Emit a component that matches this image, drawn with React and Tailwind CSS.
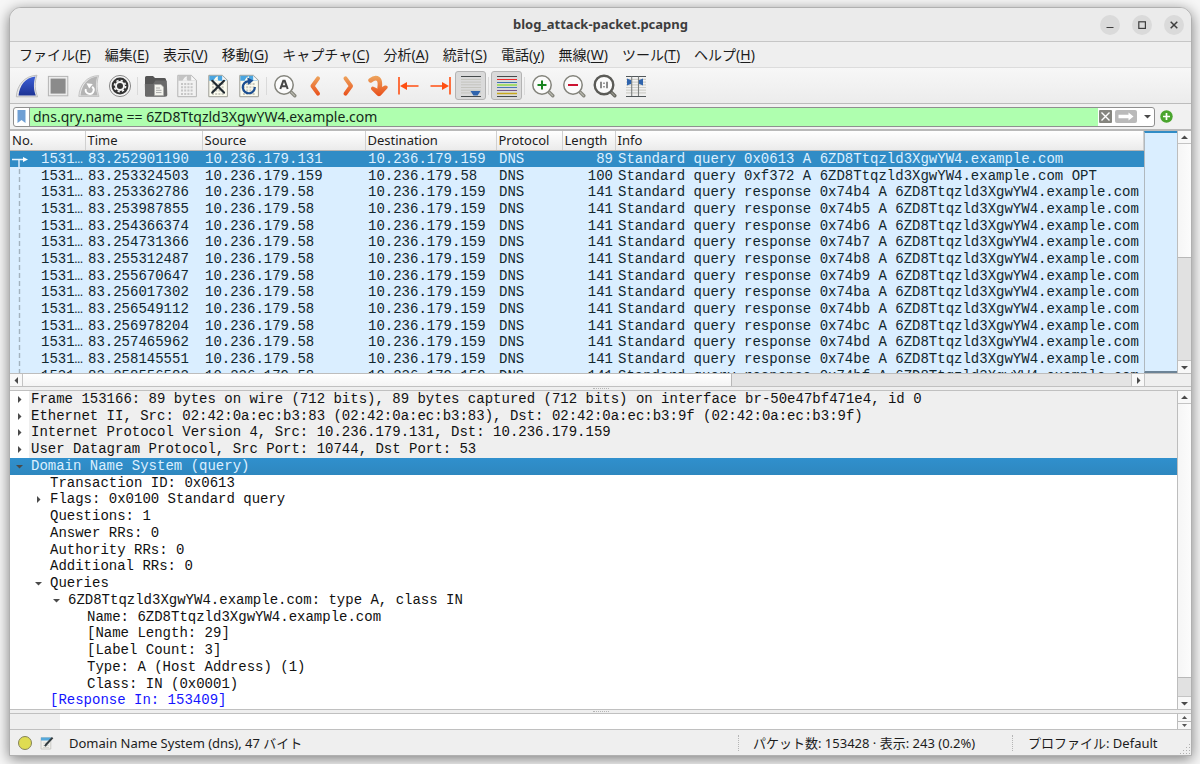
import React from 'react';

const MENUS = [
  ['ファイル', 'F'],
  ['編集', 'E'],
  ['表示', 'V'],
  ['移動', 'G'],
  ['キャプチャ', 'C'],
  ['分析', 'A'],
  ['統計', 'S'],
  ['電話', 'y'],
  ['無線', 'W'],
  ['ツール', 'T'],
  ['ヘルプ', 'H'],
];

const HOST = '6ZD8Ttqzld3XgwYW4.example.com';
const CLIENT = '10.236.179.159';
const SERVER = '10.236.179.58';

const response = (time, id) => ({
  time,
  source: SERVER,
  destination: CLIENT,
  length: 141,
  info: `Standard query response 0x${id} A ${HOST}`,
});

const PACKETS = [
  { time: '83.252901190', source: '10.236.179.131', destination: CLIENT, length: 89, info: `Standard query 0x0613 A ${HOST}` },
  { time: '83.253324503', source: CLIENT, destination: SERVER, length: 100, info: `Standard query 0xf372 A ${HOST} OPT` },
  response('83.253362786', '74b4'),
  response('83.253987855', '74b5'),
  response('83.254366374', '74b6'),
  response('83.254731366', '74b7'),
  response('83.255312487', '74b8'),
  response('83.255670647', '74b9'),
  response('83.256017302', '74ba'),
  response('83.256549112', '74bb'),
  response('83.256978204', '74bc'),
  response('83.257465962', '74bd'),
  response('83.258145551', '74be'),
  response('83.258556582', '74bf'),
];

const COLUMNS = [
  { name: 'No.', width: 'w-[75px]' },
  { name: 'Time', width: 'w-[117px]' },
  { name: 'Source', width: 'w-[163px]' },
  { name: 'Destination', width: 'w-[131px]' },
  { name: 'Protocol', width: 'w-[66px]' },
  { name: 'Length', width: 'w-[53px]' },
  { name: 'Info', width: 'w-auto' },
];

const INDENTS = ['pl-0', 'pl-[19px]', 'pl-[37px]', 'pl-[56px]'];

const DETAILS = [
  { depth: 0, mark: 'closed', shaded: true, text: 'Frame 153166: 89 bytes on wire (712 bits), 89 bytes captured (712 bits) on interface br-50e47bf471e4, id 0' },
  { depth: 0, mark: 'closed', shaded: true, text: 'Ethernet II, Src: 02:42:0a:ec:b3:83 (02:42:0a:ec:b3:83), Dst: 02:42:0a:ec:b3:9f (02:42:0a:ec:b3:9f)' },
  { depth: 0, mark: 'closed', shaded: true, text: 'Internet Protocol Version 4, Src: 10.236.179.131, Dst: 10.236.179.159' },
  { depth: 0, mark: 'closed', shaded: true, text: 'User Datagram Protocol, Src Port: 10744, Dst Port: 53' },
  { depth: 0, mark: 'open', selected: true, text: 'Domain Name System (query)' },
  { depth: 1, text: 'Transaction ID: 0x0613' },
  { depth: 1, mark: 'closed', text: 'Flags: 0x0100 Standard query' },
  { depth: 1, text: 'Questions: 1' },
  { depth: 1, text: 'Answer RRs: 0' },
  { depth: 1, text: 'Authority RRs: 0' },
  { depth: 1, text: 'Additional RRs: 0' },
  { depth: 1, mark: 'open', text: 'Queries' },
  { depth: 2, mark: 'open', text: `${HOST}: type A, class IN` },
  { depth: 3, text: `Name: ${HOST}` },
  { depth: 3, text: '[Name Length: 29]' },
  { depth: 3, text: '[Label Count: 3]' },
  { depth: 3, text: 'Type: A (Host Address) (1)' },
  { depth: 3, text: 'Class: IN (0x0001)' },
  { depth: 1, link: true, text: '[Response In: 153409]' },
];

const Icon = ({ children }) => (
  <svg viewBox="0 0 24 24" className="w-6 h-6" fill="none" aria-hidden="true">
    {children}
  </svg>
);

const FIN = 'M3.5 21.5C4.5 12 10 3.5 20.5 2.5C18.2 8.5 18.6 16 20.8 21.5Z';

const StartIcon = () => (
  <Icon>
    <defs>
      <linearGradient id="fin" x1="0" y1="0" x2="0" y2="1">
        <stop offset="0" stopColor="#3c5fd6" />
        <stop offset="1" stopColor="#1d3394" />
      </linearGradient>
    </defs>
    <path d="M1.3 22.8C2 11 9.5 1.8 22 1.2C19.3 8.5 19.8 16.5 22.6 22.8Z" fill="#e8e8e8" stroke="#b2b2b2" strokeWidth="0.8" />
    <path d={FIN} fill="url(#fin)" />
  </Icon>
);

const StopIcon = () => (
  <Icon>
    <rect x="2.4" y="2.4" width="19.4" height="19.4" fill="#ececec" stroke="#b4b4b4" />
    <rect x="4.6" y="4.6" width="15" height="15" fill="#8b8b8b" />
  </Icon>
);

const RestartIcon = () => (
  <Icon>
    <path d="M1.8 22.4C2.6 11 9.5 2 21.6 1.6C19.3 8.5 19.8 16.5 22 22.4Z" fill="#e8e8e8" stroke="#b9b9b9" strokeWidth="0.8" />
    <path d={FIN} fill="#b4b4b4" />
    <path d="M8.8 15A4 4 0 1 0 15.2 12.8" stroke="#fff" strokeWidth="1.9" />
    <path d="M9.5 9.2L15.8 10L12.2 14.4Z" fill="#fff" />
  </Icon>
);

const OptionsIcon = () => (
  <Icon>
    <circle cx="12" cy="12" r="10.6" fill="#f2f2f2" stroke="#8a8a8a" strokeWidth="1" />
    <circle cx="12" cy="12" r="8.4" fill="#333" />
    <circle cx="12" cy="12" r="4" stroke="#f4f4f4" strokeWidth="2" />
    <circle cx="12" cy="12" r="5.6" stroke="#f4f4f4" strokeWidth="1.6" strokeDasharray="2.2 2.2" />
  </Icon>
);

const OpenIcon = () => (
  <Icon>
    <path d="M1 3.5Q1 2 2.5 2H9L11 4H20.5Q22 4 22 5.5V21Q22 22.5 20.5 22.5H2.5Q1 22.5 1 21Z" fill="#555" />
    <path d="M0.8 10H9L11.5 6.5H22.8L23.3 21Q23.3 22.6 21.6 22.6H2.6Q1.2 22.6 1.1 21Z" fill="#6a6a6a" />
    <path d="M10.5 10.5H17L19.5 13V21.5H10.5Z" fill="#f4f4ee" stroke="#aaa" strokeWidth="0.6" />
    <path d="M12 14H16M12 16.3H17.5M12 18.6H17.5" stroke="#aaa" />
  </Icon>
);

const Sheet = ({ band, paper, edge, digits, children }) => (
  <Icon>
    <path d="M2.8 1.3H16.4L21.4 6.3V22.7H2.8Z" fill={paper} stroke={edge} />
    <path d="M3.3 1.8H16L20.9 6.8H3.3Z" fill={band} />
    <path d="M7.5 6.8Q9 3 12 2.2Q11.3 4.5 12.5 6.8Z" fill={paper} />
    <path d="M16.2 1.8V6.6H20.9Z" fill="#f8f8f8" />
    <path d="M6 10H18.5M6 13.3H18.5M6 16.6H18.5M6 19.9H18.5" stroke={digits} strokeWidth="2" strokeDasharray="2 1.2" />
    {children}
  </Icon>
);

const SaveIcon = () => <Sheet band="#c4c4c4" paper="#f1f1f1" edge="#b4b4b4" digits="#c6c6c6" />;

const CloseFileIcon = () => (
  <Sheet band="#4aa5e0" paper="#fbfbee" edge="#9c9c94" digits="#cacabf">
    <path d="M6.3 6.8L18 18.6M18 6.8L6.3 18.6" stroke="#222b31" strokeWidth="2.2" strokeLinecap="round" />
  </Sheet>
);

const ReloadIcon = () => (
  <Sheet band="#4aa5e0" paper="#fbfbee" edge="#9c9c94" digits="#cacabf">
    <path d="M11 7.3A6 6 0 1 0 17.8 13" stroke="#1d4f91" strokeWidth="2.2" />
    <path d="M10.3 3.5L16.5 6.6L11.3 11Z" fill="#1d4f91" />
  </Sheet>
);

const Lens = ({ dark, children }) => (
  <Icon>
    <path d="M17.5 17.5L21.8 21.8" stroke={dark ? '#66665f' : '#85857c'} strokeWidth="3.4" strokeLinecap="round" />
    <path d="M18 18L21.6 21.6" stroke={dark ? '#96968c' : '#b8b8ae'} strokeWidth="1.2" strokeLinecap="round" />
    <circle cx="11" cy="11" r={dark ? 9.3 : 9.2} fill="#fbfbfb" stroke={dark ? '#5b5b57' : '#83837b'} strokeWidth={dark ? 2.4 : 1.5} />
    {children}
  </Icon>
);

const FindIcon = () => (
  <Lens>
    <path d="M7.3 15L10.3 6.8H11.7L14.7 15M8.6 12.2H13.4" stroke="#474747" strokeWidth="2" />
  </Lens>
);

const ZoomInIcon = () => (
  <Lens>
    <path d="M11 6.5V15.5M6.5 11H15.5" stroke="#17841f" strokeWidth="2" />
  </Lens>
);

const ZoomOutIcon = () => (
  <Lens>
    <path d="M6 11H16" stroke="#cc1230" strokeWidth="2" />
  </Lens>
);

const ZoomResetIcon = () => (
  <Lens dark>
    <path d="M8 7.8V14.2M14 7.8V14.2" stroke="#666" strokeWidth="1.5" />
    <path d="M11 8.6V10M11 12V13.4" stroke="#666" strokeWidth="1.3" />
  </Lens>
);

const Orange = ({ id }) => (
  <defs>
    <linearGradient id={id} x1="0" y1="0" x2="0" y2="24" gradientUnits="userSpaceOnUse">
      <stop offset="0.1" stopColor="#eda35c" />
      <stop offset="0.9" stopColor="#e9501b" />
    </linearGradient>
  </defs>
);

const BackIcon = () => (
  <Icon>
    <Orange id="back" />
    <path d="M14 4.3L8.5 12L14 19.7" stroke="url(#back)" strokeWidth="4" strokeLinecap="round" strokeLinejoin="round" />
  </Icon>
);

const ForwardIcon = () => (
  <Icon>
    <Orange id="forward" />
    <path d="M10.5 4.3L16 12L10.5 19.7" stroke="url(#forward)" strokeWidth="4" strokeLinecap="round" strokeLinejoin="round" />
  </Icon>
);

const GotoIcon = () => (
  <Icon>
    <Orange id="goto" />
    <path d="M4.6 6.4Q9 2.8 12.3 5Q14.6 7 13.6 14" stroke="url(#goto)" strokeWidth="4.6" strokeLinecap="round" />
    <path d="M5.2 13.6Q6.2 12.1 8 12.9L12.3 15L18.8 11.6Q22.2 11.2 21.6 14L14.8 21.5Q13 22.8 11.2 21.6L5.4 15.8Q4.6 14.6 5.2 13.6Z" fill="url(#goto)" />
  </Icon>
);

const FirstIcon = () => (
  <Icon>
    <path d="M2 3V20.5M7 12H21.5" stroke="#ff4f12" strokeWidth="1.6" />
    <path d="M3 12L10 8V16Z" fill="#ff4f12" />
  </Icon>
);

const LastIcon = () => (
  <Icon>
    <path d="M22 3V20.5M2.5 12H17" stroke="#ff4f12" strokeWidth="1.6" />
    <path d="M21 12L14 8V16Z" fill="#ff4f12" />
  </Icon>
);

const AutoScrollIcon = () => (
  <Icon>
    <path d="M2 5.4H22M2 8.1H22M2 10.8H22M2 13.5H22M2 16.2H22M2 18.9H22" stroke="#c4c4be" strokeWidth="1" />
    <path d="M2 2.5H22M2 22.5H22" stroke="#454a4b" strokeWidth="1" />
    <path d="M11.5 17H21.5L18.6 21.6H14.4Z" fill="#2f64ad" />
  </Icon>
);

const ColorizeIcon = () => (
  <Icon>
    <path d="M2 2.5H22M2 22.5H22" stroke="#454a4b" strokeWidth="1" />
    <path d="M2 5.5H22" stroke="#ef2929" strokeWidth="1.2" />
    <path d="M2 8.5H22" stroke="#3c6fb0" strokeWidth="1.1" />
    <path d="M2 11H22" stroke="#a5dc6c" strokeWidth="2" />
    <path d="M2 13.5H22" stroke="#4a78b5" strokeWidth="1.1" />
    <path d="M2 16.5H22" stroke="#77568a" strokeWidth="1.1" />
    <path d="M2 19.5H22" stroke="#c8a81c" strokeWidth="1.3" />
  </Icon>
);

const ResizeIcon = () => (
  <Icon>
    <path d="M2 5.4H22M2 8.1H22M2 10.8H22M2 13.5H22M2 16.2H22M2 18.9H22" stroke="#cfcfca" strokeWidth="1.2" />
    <path d="M2 2.5H22M2 22.5H22" stroke="#51575a" strokeWidth="1.1" />
    <path d="M7.7 2.4V22M14.5 2.4V22" stroke="#7d8080" strokeWidth="1.1" />
    <path d="M3 4.5L7.2 6.2V9.8L3 11.5ZM19 4.5L14.9 6.2V9.8L19 11.5Z" fill="#2f64ad" />
  </Icon>
);

const TOOLS = [
  { label: 'Start capture', icon: StartIcon },
  { label: 'Stop capture', icon: StopIcon },
  { label: 'Restart capture', icon: RestartIcon },
  { label: 'Capture options', icon: OptionsIcon },
  null,
  { label: 'Open', icon: OpenIcon },
  { label: 'Save', icon: SaveIcon },
  { label: 'Close', icon: CloseFileIcon },
  { label: 'Reload', icon: ReloadIcon },
  null,
  { label: 'Find packet', icon: FindIcon },
  { label: 'Previous packet', icon: BackIcon },
  { label: 'Next packet', icon: ForwardIcon },
  { label: 'Go to packet', icon: GotoIcon },
  { label: 'First packet', icon: FirstIcon },
  { label: 'Last packet', icon: LastIcon },
  { label: 'Auto scroll', icon: AutoScrollIcon, pressed: true },
  null,
  { label: 'Colorize', icon: ColorizeIcon, pressed: true },
  null,
  { label: 'Zoom in', icon: ZoomInIcon },
  { label: 'Zoom out', icon: ZoomOutIcon },
  { label: 'Normal size', icon: ZoomResetIcon },
  { label: 'Resize columns', icon: ResizeIcon },
];

const ARROWS = {
  up: 'M1 6L4.5 2.5L8 6Z',
  down: 'M1 3L4.5 6.5L8 3Z',
  left: 'M6 1L2.5 4.5L6 8Z',
  right: 'M3 1L6.5 4.5L3 8Z',
};

const Arrow = ({ dir }) => (
  <svg viewBox="0 0 9 9" className="w-[9px] h-[9px]" aria-hidden="true">
    <path d={ARROWS[dir]} fill="#4a4a4a" />
  </svg>
);

const VerticalScrollbar = ({ thumb }) => (
  <div className="w-[14px] shrink-0 flex flex-col bg-[#e1e1e1] border-l border-[#bdbdbd]">
    <button type="button" aria-label="Scroll up" className="h-[13px] shrink-0 flex items-center justify-center bg-[#f8f8f8] border-b border-[#c4c4c4]">
      <Arrow dir="up" />
    </button>
    <div className="flex-1 min-h-0">
      <div className={`bg-gradient-to-r from-[#f6f6f6] to-[#fcfcfc] border-b border-[#b8b8b8] ${thumb}`} />
    </div>
    <button type="button" aria-label="Scroll down" className="h-[13px] shrink-0 flex items-center justify-center bg-[#f8f8f8] border-t border-[#c4c4c4]">
      <Arrow dir="down" />
    </button>
  </div>
);

const Splitter = () => (
  <div className="h-[5px] shrink-0 flex items-center justify-center bg-[#efefef] border-y border-[#c0c0c0]">
    <div className="w-4 border-t border-dotted border-[#b5b5b5]" />
  </div>
);

const TitleBar = () => (
  <header className="h-[34px] shrink-0 grid grid-cols-[1fr_auto_1fr] items-center bg-[#ebebeb] border-b border-[#c6c6c6]">
    <span />
    <h1 className="text-[13px] font-bold text-[#3d3d3d]">blog_attack-packet.pcapng</h1>
    <div className="flex justify-end gap-3 pr-[7px]">
      <button type="button" aria-label="Minimize" className="w-5 h-5 rounded-full bg-[#dadada]">
        <svg viewBox="0 0 20 20" className="w-5 h-5"><path d="M6.5 12.5H13.5" stroke="#3d3d3d" strokeWidth="1.2" /></svg>
      </button>
      <button type="button" aria-label="Maximize" className="w-5 h-5 rounded-full bg-[#dadada]">
        <svg viewBox="0 0 20 20" className="w-5 h-5"><rect x="6.8" y="6.8" width="6.6" height="6.6" fill="none" stroke="#3d3d3d" strokeWidth="1.2" /></svg>
      </button>
      <button type="button" aria-label="Close" className="w-5 h-5 rounded-full bg-[#dadada]">
        <svg viewBox="0 0 20 20" className="w-5 h-5"><path d="M6.7 6.7L13.3 13.3M13.3 6.7L6.7 13.3" stroke="#3d3d3d" strokeWidth="1.5" /></svg>
      </button>
    </div>
  </header>
);

const FilterBar = () => (
  <div className="h-[27px] shrink-0 flex items-center gap-[5px] pl-[3px] pr-[18px] bg-[#f1f1f1] border-b-2 border-[#b9b9b9]">
    <div className="flex-1 h-[20px] flex items-center bg-white border border-[#8f8f8f] rounded-[3px] overflow-hidden">
      <button type="button" aria-label="Bookmark filter" className="w-4 h-full shrink-0 flex items-center justify-center border-r border-[#9a9a9a]">
        <svg viewBox="0 0 9 13" className="w-[9px] h-[13px]"><path d="M0.5 0H8.5V13L4.5 10L0.5 13Z" fill="#6f9fd4" /></svg>
      </button>
      <input
        type="text"
        aria-label="Display filter"
        defaultValue={`dns.qry.name == ${HOST}`}
        className="flex-1 min-w-0 h-full pl-[3px] bg-[#afffaf] text-[14px] text-[#14281a] outline-none"
      />
      <div className="flex items-center gap-[3px] pl-px">
        <button type="button" aria-label="Clear filter" className="w-[13px] h-[13px] rounded-[1px] bg-[#85857f]">
          <svg viewBox="0 0 13 13" className="w-[13px] h-[13px]"><path d="M2.5 2.5L10.5 10.5M10.5 2.5L2.5 10.5" stroke="#fff" strokeWidth="1.4" /></svg>
        </button>
        <button type="button" aria-label="Apply filter" className="w-[22px] h-[13px] rounded-[2px] bg-[#bababa]">
          <svg viewBox="0 0 22 13" className="w-[22px] h-[13px]"><path d="M3.5 4.8H13.5V2.5L18.5 6.5L13.5 10.5V8.2H3.5Z" fill="#fff" /></svg>
        </button>
        <button type="button" aria-label="Recent filters" className="w-[14px] h-[13px] flex items-center justify-center">
          <Arrow dir="down" />
        </button>
      </div>
    </div>
    <button type="button" aria-label="Add filter button" className="w-[13px] h-[13px]">
      <svg viewBox="0 0 13 13" className="w-[13px] h-[13px]">
        <circle cx="6.5" cy="6.5" r="6.2" fill="#4aa52e" />
        <path d="M6.5 3V10M3 6.5H10" stroke="#fff" strokeWidth="1.7" />
      </svg>
    </button>
  </div>
);

const PacketList = () => (
  <section className="shrink-0">
    <div className="flex h-[242px]">
      <div className="relative flex-1 min-w-0 overflow-hidden bg-[#daeeff]">
        <table className="w-full h-[253px] table-fixed border-collapse whitespace-nowrap">
          <thead>
            <tr className="h-[19px] bg-gradient-to-b from-white to-[#ebebeb]">
              {COLUMNS.map((col) => (
                <th key={col.name} scope="col" className={`${col.width} p-0 pl-[2px] border-r border-b border-r-[#d0d0d0] border-b-[#b5b5b5] text-left text-[13px] leading-[18px] font-normal text-[#1c1c1c]`}>
                  {col.name}
                </th>
              ))}
            </tr>
          </thead>
          <tbody className='font-["Liberation_Mono",monospace] text-[14px] leading-4'>
            {PACKETS.map((p, i) => (
              <tr key={p.time} className={i === 0 ? 'bg-[#308cc6] text-[#dcefff]' : 'text-[#12272e]'}>
                <td className="p-0 pr-[2px] text-right">1531…</td>
                <td className="p-0 pl-[3px]">{p.time}</td>
                <td className="p-0 pl-[3px]">{p.source}</td>
                <td className="p-0 pl-[3px]">{p.destination}</td>
                <td className="p-0 pl-[3px]">DNS</td>
                <td className="p-0 pr-[2px] text-right">{p.length}</td>
                <td className="p-0 pl-[3px]">{p.info}</td>
              </tr>
            ))}
          </tbody>
        </table>
        {/* conversation marker drawn over the No. column */}
        <svg viewBox="0 0 20 222" className="absolute left-0 top-5 w-5 h-[222px]" aria-hidden="true">
          <path d="M2 8.5H14M9 8.5V16" stroke="#e8f4ff" strokeWidth="1.4" />
          <path d="M13 6L18 8.5L13 11Z" fill="#fff" />
          <path d="M9.5 18V222" stroke="#a3b3bf" strokeWidth="1.4" strokeDasharray="5 3" />
        </svg>
      </div>
      <div className="w-[33px] shrink-0 bg-[#daeeff] border-l border-l-[#b0b8be] border-t-2 border-t-[#308cc6] border-b-2 border-b-[#6c8396]" />
      <VerticalScrollbar thumb="h-[53%]" />
    </div>
    <div className="flex h-[13px] bg-[#efefef] border-t border-[#bdbdbd]">
      <div className="flex-1 flex bg-[#e4e4e4]">
        <button type="button" aria-label="Scroll left" className="w-[13px] shrink-0 flex items-center justify-center bg-[#f8f8f8] border-r border-[#c4c4c4]">
          <Arrow dir="left" />
        </button>
        <div className="flex-1">
          <div className="w-[64%] h-full bg-gradient-to-b from-white to-[#f4f4f4] border-r border-[#b8b8b8]" />
        </div>
        <button type="button" aria-label="Scroll right" className="w-[14px] shrink-0 flex items-center justify-center bg-[#f8f8f8] border-x border-[#c4c4c4]">
          <Arrow dir="right" />
        </button>
      </div>
      <div className="w-[46px] shrink-0" />
    </div>
  </section>
);

const DetailRow = ({ row }) => {
  let tone = 'text-[#111]';
  if (row.selected) tone = 'bg-gradient-to-b from-[#3090cd] to-[#2e87bf] text-[#dcefff]';
  return (
    <li className={`flex min-h-4 ${INDENTS[row.depth]} ${tone}`}>
      <span className="w-[19px] shrink-0 flex items-center justify-center">
        {row.mark && <Arrow dir={row.mark === 'open' ? 'down' : 'right'} />}
      </span>
      <span className={`flex-1 pl-[2px] whitespace-pre ${row.shaded ? 'bg-[#efefef]' : ''}`}>
        {row.link ? <a href="#153409" className="text-[#1414ff]">{row.text}</a> : row.text}
      </span>
    </li>
  );
};

const PacketDetails = () => (
  <section className="flex-1 flex bg-white">
    <ul className='flex-1 min-w-0 grid auto-rows-fr overflow-hidden font-["Liberation_Mono",monospace] text-[14px] leading-4'>
      {DETAILS.map((row) => (
        <DetailRow key={row.text} row={row} />
      ))}
    </ul>
    <VerticalScrollbar thumb="h-[94%]" />
  </section>
);

const BytesPane = () => (
  <section className="h-[15px] shrink-0 flex bg-white">
    <div className="w-[50px] bg-[#efefef]" />
    <div className="flex-1" />
    <div className="w-[14px] flex flex-col bg-[#f8f8f8] border-l border-[#bdbdbd]">
      <button type="button" aria-label="Scroll bytes up" className="flex-1 flex items-center justify-center border-b border-[#b8b8b8]">
        <svg viewBox="0 0 5 3" className="w-[5px] h-[3px]"><path d="M0 3L2.5 0L5 3Z" fill="#555" /></svg>
      </button>
      <button type="button" aria-label="Scroll bytes down" className="flex-1 flex items-center justify-center">
        <svg viewBox="0 0 5 3" className="w-[5px] h-[3px]"><path d="M0 0L2.5 3L5 0Z" fill="#555" /></svg>
      </button>
    </div>
  </section>
);

const StatusBar = () => (
  <footer className="h-[26px] shrink-0 flex items-center bg-[#efefef] border-t border-[#c0c0c0] text-[13px] leading-4 text-[#1c1c1c]">
    <button type="button" aria-label="Expert information" className="ml-2 w-[14px] h-[14px] rounded-full bg-[#dfdc52] border border-[#85835a]" />
    <button type="button" aria-label="Capture comment" className="ml-2 w-[14px] h-[14px]">
      <svg viewBox="0 0 14 14" className="w-[14px] h-[14px]">
        <path d="M1 1.5H10.8V13H1Z" fill="#f0f0ec" stroke="#c2c2bd" strokeWidth="0.8" />
        <path d="M1 1.5H10.8V4.5H1Z" fill="#55a9dc" />
        <path d="M3 7H9M3 9.5H9M3 11.5H9" stroke="#d0d0ca" strokeWidth="0.8" />
        <path d="M12.6 1.6L6.4 8.2L5 10.2" stroke="#333c40" strokeWidth="2" fill="none" />
      </svg>
    </button>
    <span className="flex-1 pl-[15px]">Domain Name System (dns), 47 バイト</span>
    <span className="w-[274px] pl-[14px] border-l border-dotted border-[#b5b5b5]">パケット数: 153428 · 表示: 243 (0.2%)</span>
    <span className="w-[167px] pl-[15px] border-l border-dotted border-[#b5b5b5]">プロファイル: Default</span>
    <svg viewBox="0 0 12 12" className="w-3 h-3 self-end" aria-hidden="true">
      <path d="M1 10.5H11M4 7.5H11M7 4.5H11M10 1.5H11" stroke="#b0b0b0" strokeDasharray="1 2" />
    </svg>
  </footer>
);

export default function App() {
  return (
    <div className='min-h-screen flex flex-col pt-[7px] pb-2 pl-[9px] pr-2 bg-[#f7f7f7] font-["Noto_Sans","Noto_Sans_CJK_JP",sans-serif]'>
      <div className="flex-1 flex flex-col overflow-hidden rounded-t-xl border border-[#b0b0b0] bg-[#efefef] shadow-[0_3px_14px_rgba(0,0,0,0.5)]">
        <TitleBar />
        <nav className="h-[26px] shrink-0 flex items-center gap-[14px] pl-[9px] bg-[#efefef] border-b border-[#dcdcdc] text-[14px] leading-5 text-[#1c1c1c] whitespace-nowrap">
          {MENUS.map(([label, key]) => (
            <button key={label} type="button">
              {label}(<u className="underline-offset-2">{key}</u>)
            </button>
          ))}
        </nav>
        <div className="h-[36px] shrink-0 flex items-center pl-px bg-gradient-to-b from-[#f7f7f7] to-[#ececec] border-b border-[#bcbcbc]">
          {TOOLS.map((tool, i) =>
            tool ? (
              <button
                key={tool.label}
                type="button"
                aria-label={tool.label}
                className={`w-[31px] h-[29px] flex items-center justify-center ${
                  tool.pressed ? 'rounded-[3px] border border-[#b3b3b3] bg-[#dadada]' : ''
                }`}
              >
                <tool.icon />
              </button>
            ) : (
              <div key={i} className="w-[5px] h-[18px] flex justify-center">
                <div className="w-px bg-[#dadada]" />
              </div>
            )
          )}
        </div>
        <FilterBar />
        <PacketList />
        <Splitter />
        <PacketDetails />
        <Splitter />
        <BytesPane />
        <StatusBar />
      </div>
    </div>
  );
}
